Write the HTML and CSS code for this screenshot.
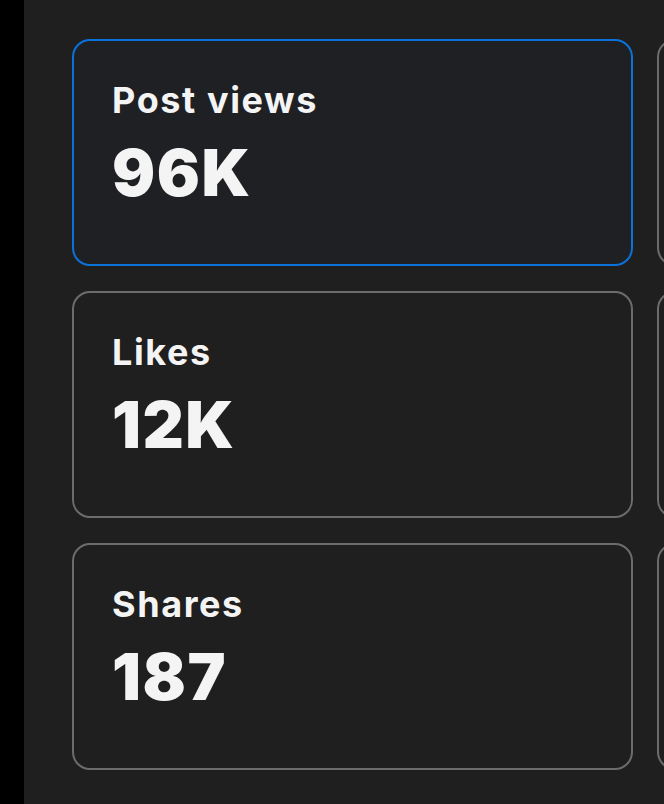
FILE: index.html
```html
<!DOCTYPE html>
<html lang="en">
<head>
<meta charset="utf-8">
<title>Stats</title>
<link rel="stylesheet" href="styles.css">
</head>
<body>
<div class="page">
  <div class="rail"></div>
  <main class="main">
    <div class="grid">
      <div class="card card--active">
        <div class="label">Post views</div>
        <div class="value">96K</div>
      </div>
      <div class="card card--peek"></div>
      <div class="card">
        <div class="label">Likes</div>
        <div class="value">12K</div>
      </div>
      <div class="card card--peek"></div>
      <div class="card">
        <div class="label">Shares</div>
        <div class="value">187</div>
      </div>
      <div class="card card--peek"></div>
    </div>
  </main>
</div>
</body>
</html>
```

FILE: styles.css
```css
html, body {
  margin: 0;
  padding: 0;
  height: 100%;
  background: #000;
  overflow: hidden;
}

.page {
  display: flex;
  height: 100vh;
  font-family: Inter, "Noto Sans", sans-serif;
}

.rail {
  flex: 0 0 24px;
  background: #000;
}

.main {
  flex: 1 1 auto;
  background: #1f1f1f;
  padding: 39px 0 0 48px;
  overflow: hidden;
}

.grid {
  display: grid;
  grid-template-columns: 561px 561px;
  grid-auto-rows: 227px;
  column-gap: 24px;
  row-gap: 25px;
}

.card {
  box-sizing: border-box;
  border: 2px solid #6c6c6c;
  border-radius: 18px;
  padding: 38px 38px 0;
  background: #1f1f1f;
  color: #f4f4f4;
}

.card--active {
  border-color: #0b72da;
  background: #1e2024;
}

.label {
  font-size: 36px;
  line-height: 42px;
  font-weight: 700;
  letter-spacing: 1.6px;
}

.value {
  margin-top: 14px;
  font-size: 64px;
  line-height: 76px;
  font-weight: 900;
  letter-spacing: 1.5px;
}
```
